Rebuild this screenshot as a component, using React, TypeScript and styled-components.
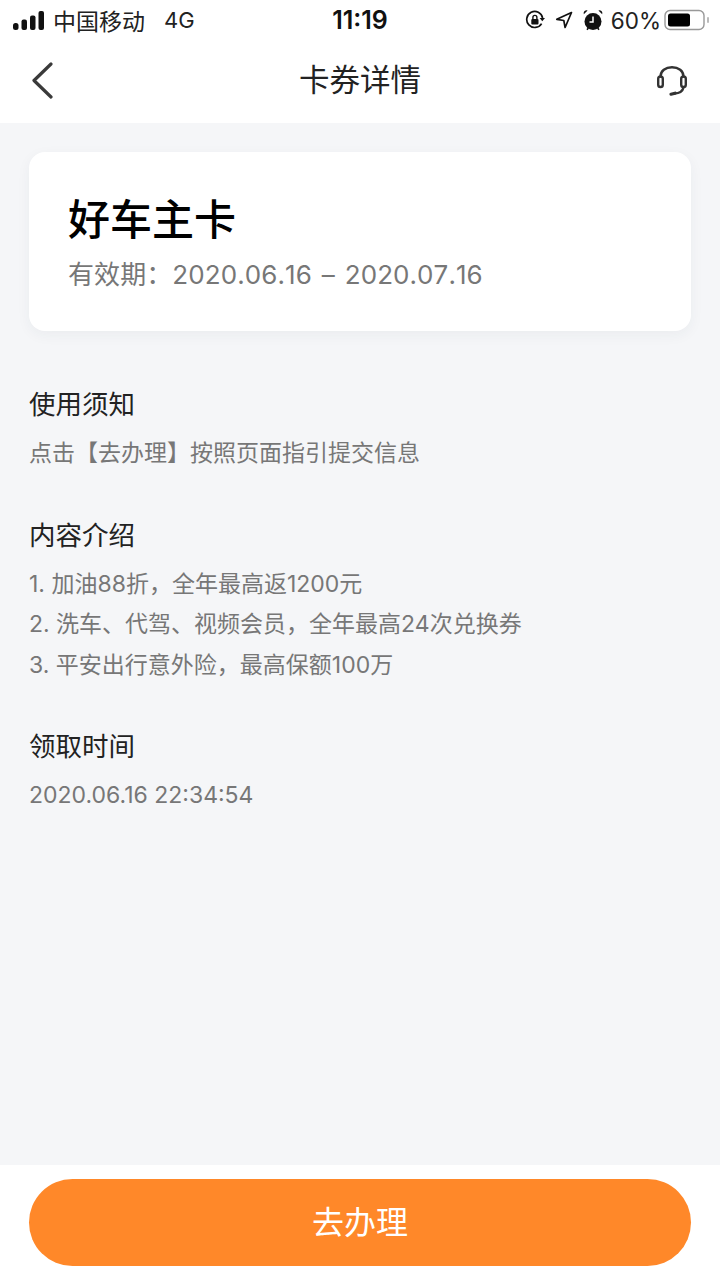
import React from "react";
import styled, { createGlobalStyle } from "styled-components";

const GlobalStyle = createGlobalStyle`
  html, body {
    margin: 0;
    padding: 0;
    background: #ffffff;
    font-family: "Inter", "Noto Sans CJK SC", sans-serif;
  }
`;

const Page = styled.div`
  width: 720px;
  height: 1280px;
  display: flex;
  flex-direction: column;
  overflow: hidden;
`;

const StatusBar = styled.div`
  height: 40px;
  padding: 0 10px 0 13px;
  box-sizing: border-box;
  display: grid;
  grid-template-columns: 1fr auto 1fr;
  align-items: center;
  font-size: 23px;
  color: #222;
`;

const StatusLeft = styled.div`
  display: flex;
  align-items: center;
  gap: 9px;
`;

const Network = styled.span`
  margin-left: 10px;
  font-size: 22px;
`;

const Clock = styled.div`
  font-size: 25px;
  font-weight: 600;
  color: #111;
  margin-right: 3px;
`;

const StatusRight = styled.div`
  display: flex;
  align-items: center;
  justify-content: flex-end;
  gap: 10px;
`;

const Percent = styled.span`
  font-size: 22.5px;
  margin: 0 -7px 0 -2px;
`;

const NavBar = styled.div`
  height: 83px;
  padding: 0 29px;
  display: grid;
  grid-template-columns: 1fr auto 1fr;
  align-items: center;
  background: #fff;
`;

const BackButton = styled.div`
  display: flex;
  align-items: center;
  margin: 0 0 3px 2px;
`;

const NavTitle = styled.div`
  font-size: 30.5px;
  color: #222;
  margin-bottom: 8px;
`;

const SupportButton = styled.div`
  display: flex;
  align-items: center;
  justify-content: flex-end;
  margin: 0 4px 2px 0;
`;

const Content = styled.main`
  flex: 1;
  background: #f5f6f8;
  padding: 29px 29px 0;
  display: flex;
  flex-direction: column;
`;

const Card = styled.section`
  height: 179px;
  box-sizing: border-box;
  padding: 41px 39px 0;
  background: #fff;
  border-radius: 16px;
  box-shadow: 0 4px 14px rgba(40, 50, 70, 0.05);
  margin-bottom: 53px;
`;

const CardTitle = styled.h1`
  margin: 0 0 9px;
  font-size: 42px;
  line-height: 54px;
  font-weight: 500;
  color: #000;
`;

const CardDate = styled.div`
  font-size: 26px;
  line-height: 38px;
  word-spacing: 2.5px;
  letter-spacing: 0.08px;
  font-kerning: none;
  color: #777;
`;

const Section = styled.section`
  margin-bottom: 41px;
`;

const SectionTitle = styled.h2`
  margin: 0 0 9px;
  font-size: 26.5px;
  line-height: 40px;
  font-weight: 400;
  color: #222;
`;

const Line = styled.p`
  margin: 0;
  font-size: 23px;
  line-height: 40.5px;
  color: #777;
`;

const Footer = styled.footer`
  height: 115px;
  padding: 14px 29px 0;
  box-sizing: border-box;
  background: #fff;
`;

const ActionButton = styled.button`
  width: 100%;
  height: 87px;
  padding: 0 0 6px;
  border: none;
  border-radius: 44px;
  background: #ff8829;
  color: #fff;
  font-family: inherit;
  font-size: 32px;
`;

const SignalIcon = () => (
  <svg width="31" height="19" viewBox="0 0 31 19" fill="#111">
    <rect x="0" y="12" width="5.500" height="7" rx="2.500" />
    <rect x="8.500" y="8.500" width="5.500" height="10.500" rx="2" />
    <rect x="17" y="4.500" width="5.500" height="14.500" rx="2" />
    <rect x="25.500" y="0" width="5.500" height="19" rx="2" />
  </svg>
);

const RotationLockIcon = () => (
  <svg width="20" height="20" viewBox="0 0 20 20" fill="none">
    <path d="M16.600 13.600A8 8 0 1 1 17.600 8" stroke="#111" strokeWidth="1.700" />
    <path d="M14.600 8h5.400l-2.700 3.200z" fill="#111" />
    <rect x="6.300" y="9" width="7.200" height="5.600" rx="1" fill="#111" />
    <path d="M7.900 9V7.400a2 2 0 0 1 4 0V9" stroke="#111" strokeWidth="1.400" />
  </svg>
);

const LocationIcon = () => (
  <svg width="18" height="18" viewBox="0 0 18 18" fill="none">
    <path d="M16.500 1.500 1.800 8.300l7 1.200 1.300 7z" stroke="#111" strokeWidth="1.700" strokeLinejoin="round" />
  </svg>
);

const AlarmIcon = () => (
  <svg width="20" height="22" viewBox="0 0 20 22" fill="none">
    <circle cx="10" cy="12.500" r="8.500" fill="#111" />
    <path d="M10 7.500v5.500h-3.500" stroke="#fff" strokeWidth="1.500" />
    <path d="M0.800 5.200 4.600 1.400A3 3 0 0 0 0.800 5.200zM19.200 5.200 15.400 1.400a3 3 0 0 1 3.800 3.800z" fill="#111" />
    <path d="M4 20.800 5.400 19M16 20.800 14.600 19" stroke="#111" strokeWidth="1.600" />
  </svg>
);

const BatteryIcon = () => (
  <svg width="46" height="22" viewBox="0 0 46 22" fill="none">
    <rect x="1" y="1.500" width="39" height="19" rx="5" stroke="#999" strokeWidth="1.400" />
    <rect x="4" y="4.500" width="22" height="13" rx="2.500" fill="#000" />
    <rect x="43" y="8" width="2" height="6" rx="1" fill="#bbb" />
  </svg>
);

const BackIcon = () => (
  <svg width="22" height="37" viewBox="0 0 22 37" fill="none">
    <path d="M20 2 3 18.500 20 35" stroke="#3a3a3a" strokeWidth="3.200" strokeLinecap="round" strokeLinejoin="round" />
  </svg>
);

const HeadsetIcon = () => (
  <svg width="30" height="30" viewBox="0 0 30 30" fill="none" stroke="#333" strokeWidth="2.400" strokeLinecap="round">
    <path d="M3.500 10.500C3.500 5 8.500 1.200 15 1.200s11.500 3.800 11.500 9.300" />
    <rect x="1.200" y="10.500" width="4.600" height="10.500" rx="2.300" />
    <rect x="24.200" y="10.500" width="4.600" height="10.500" rx="2.300" />
    <path d="M26.500 21.500c-.8 3.500-4.500 5.800-9 6" />
    <path d="M14 28.200 18 27.200" strokeWidth="3.200" />
  </svg>
);

const sections = [
  { title: "使用须知", lines: ["点击【去办理】按照页面指引提交信息"] },
  {
    title: "内容介绍",
    lines: [
      "1. 加油88折，全年最高返1200元",
      "2. 洗车、代驾、视频会员，全年最高24次兑换券",
      "3. 平安出行意外险，最高保额100万",
    ],
  },
  { title: "领取时间", lines: ["2020.06.16 22:34:54"] },
];

const App: React.FC = () => {
  return (
    <Page>
      <GlobalStyle />
      <StatusBar>
        <StatusLeft>
          <SignalIcon />
          <span>中国移动</span>
          <Network>4G</Network>
        </StatusLeft>
        <Clock>11:19</Clock>
        <StatusRight>
          <RotationLockIcon />
          <LocationIcon />
          <AlarmIcon />
          <Percent>60%</Percent>
          <BatteryIcon />
        </StatusRight>
      </StatusBar>
      <NavBar>
        <BackButton>
          <BackIcon />
        </BackButton>
        <NavTitle>卡券详情</NavTitle>
        <SupportButton>
          <HeadsetIcon />
        </SupportButton>
      </NavBar>
      <Content>
        <Card>
          <CardTitle>好车主卡</CardTitle>
          <CardDate>有效期：2020.06.16 – 2020.07.16</CardDate>
        </Card>
        {sections.map((section) => (
          <Section key={section.title}>
            <SectionTitle>{section.title}</SectionTitle>
            {section.lines.map((line) => (
              <Line key={line}>{line}</Line>
            ))}
          </Section>
        ))}
      </Content>
      <Footer>
        <ActionButton>去办理</ActionButton>
      </Footer>
    </Page>
  );
};

export default App;
